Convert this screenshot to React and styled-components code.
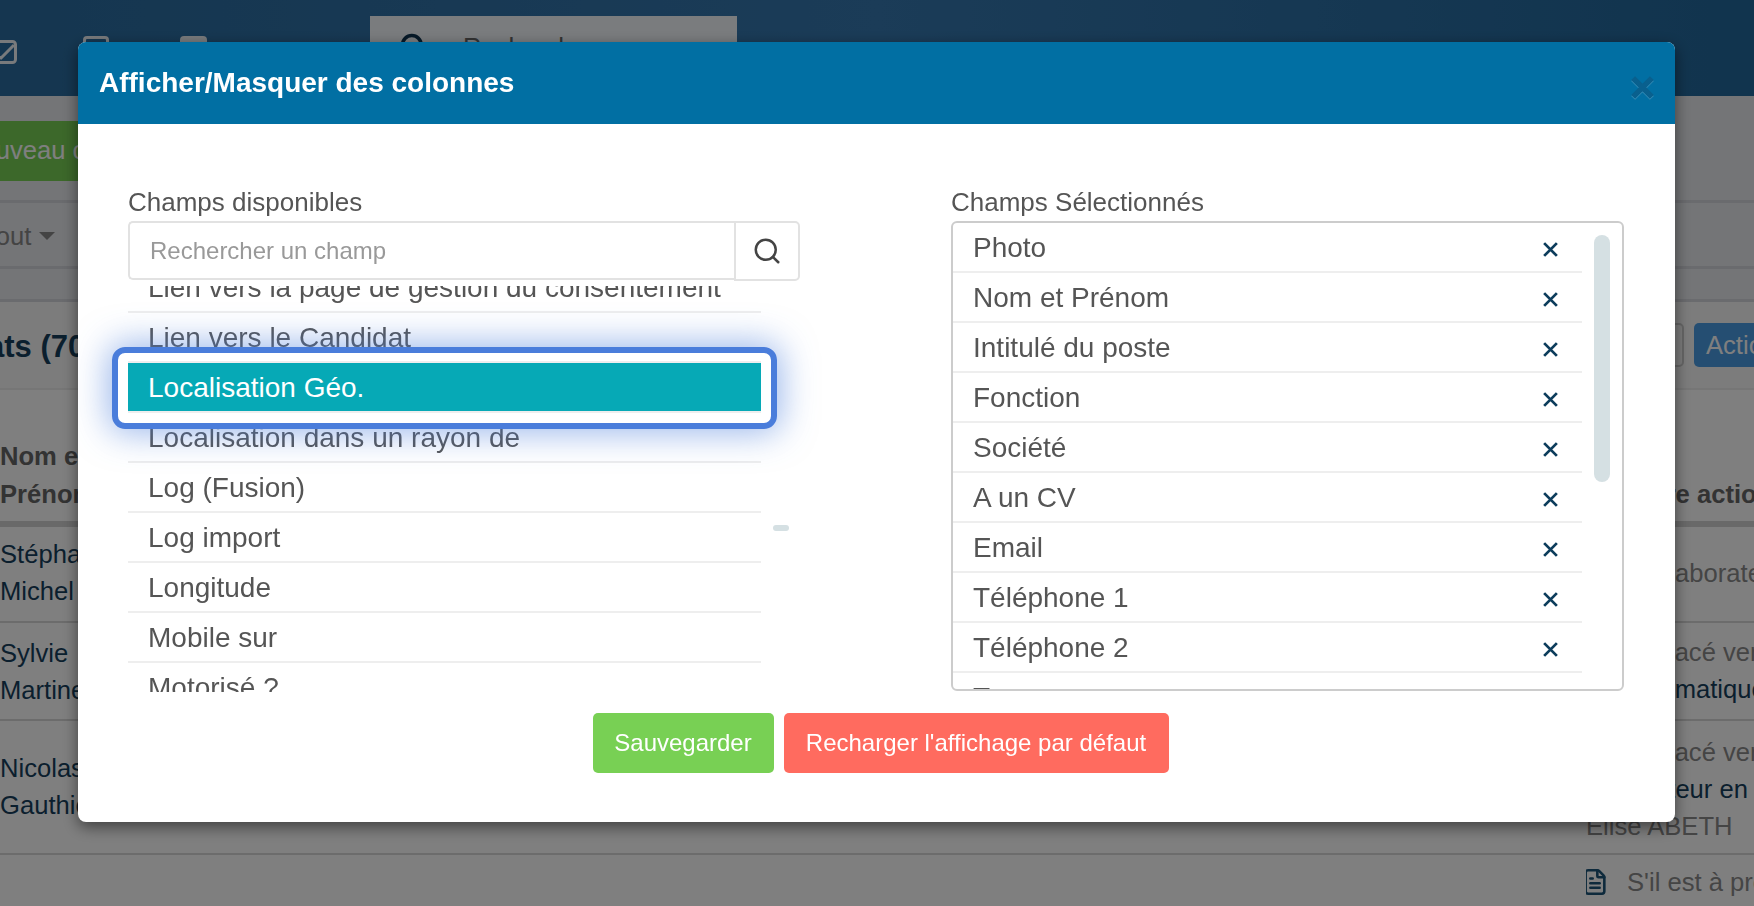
import React from 'react'
import styled, { createGlobalStyle } from 'styled-components'
import { Search, FileText } from 'lucide-react'

const available = [
  'Lien vers la page de gestion du consentement',
  'Lien vers le Candidat',
  'Localisation Géo.',
  'Localisation dans un rayon de',
  'Log (Fusion)',
  'Log import',
  'Longitude',
  'Mobile sur',
  'Motorisé ?',
]

const selected = [
  'Photo',
  'Nom et Prénom',
  'Intitulé du poste',
  'Fonction',
  'Société',
  'A un CV',
  'Email',
  'Téléphone 1',
  'Téléphone 2',
  'Type',
]

const TimesIcon = ({ size = 17, width = 2.6 }) => (
  <svg width={size} height={size} viewBox="0 0 16 16" fill="none" stroke="currentColor" strokeWidth={width}>
    <path d="M2 2 L14 14 M14 2 L2 14" />
  </svg>
)

const App = () => (
  <>
    <GlobalStyle />
    <Page>
      <TopBar>
        <CheckIcon>
          <svg width="26" height="24" viewBox="0 0 26 24" fill="none" stroke="currentColor" strokeWidth="3">
            <rect x="1.5" y="1.5" width="23" height="21" rx="3" />
            <path d="M4 16 L10 18 L23 5" />
          </svg>
        </CheckIcon>
        <OutlineIcon />
        <FilledIcon />
        <SearchBox>
          <Search size={28} strokeWidth={3} color="#0d3350" />
          <SearchHint>Rechercher</SearchHint>
        </SearchBox>
      </TopBar>

      <Band $h={107} $pad={25}>
        <GreenButton>Nouveau candidat</GreenButton>
      </Band>
      <Band $h={66} $pad={14}>
        <FilterLabel>Tout<Caret /></FilterLabel>
      </Band>
      <Band $h={33} />

      <TitleRow>
        <PageTitle>Candidats (70)</PageTitle>
        <TitleActions>
          <GhostButton />
          <BlueButton>Actions</BlueButton>
        </TitleActions>
      </TitleRow>

      <TableHead>
        <HeadCell>Nom et<br />Prénom</HeadCell>
        <HeadRight>Dernière action</HeadRight>
      </TableHead>

      <TableRow $h={96}>
        <NameCell $pad={9}>Stéphane<br />Michel</NameCell>
        <ActionCell $pad={28}>
          <Muted $x={45}>Collaborateur</Muted>
        </ActionCell>
      </TableRow>
      <TableRow $h={98}>
        <NameCell $pad={12}>Sylvie<br />Martinez</NameCell>
        <ActionCell $pad={11}>
          <Muted $x={36}>Déplacé vers</Muted>
          <Strong $x={36}>Automatique</Strong>
        </ActionCell>
      </TableRow>
      <TableRow $h={134}>
        <NameCell $pad={29}>Nicolas<br />Gauthier</NameCell>
        <ActionCell $pad={13}>
          <Muted $x={36}>Déplacé vers</Muted>
          <Strong $x={14}>Recruteur en ligne</Strong>
          <Muted $x={0}>Elise ABETH</Muted>
        </ActionCell>
      </TableRow>
      <LastRow>
        <ActionCell $pad={12}>
          <NoteLine>
            <FileText size={28} strokeWidth={2.2} color="#1c5478" />
            <span>S'il est à prévoir</span>
          </NoteLine>
        </ActionCell>
      </LastRow>
    </Page>

    <Overlay>
      <Modal>
        <ModalHeader>
          <ModalTitle>Afficher/Masquer des colonnes</ModalTitle>
          <CloseButton aria-label="Fermer">
            <TimesIcon size={25} width={3.6} />
          </CloseButton>
        </ModalHeader>

        <ModalBody>
          <Column>
            <FieldLabel>Champs disponibles</FieldLabel>
            <InputGroup>
              <SearchInput type="text" placeholder="Rechercher un champ" />
              <InputAddon>
                <Search size={30} strokeWidth={2} color="#444" />
              </InputAddon>
            </InputGroup>
            <ListViewport>
              <ScrolledList>
                {available.map((name) => (
                  <AvailableRow key={name} $active={name === 'Localisation Géo.'}>{name}</AvailableRow>
                ))}
              </ScrolledList>
              <MiniThumb />
            </ListViewport>
          </Column>

          <Column>
            <FieldLabel>Champs Sélectionnés</FieldLabel>
            <SelectedBox>
              {selected.map((name) => (
                <SelectedRow key={name}>
                  <span>{name}</span>
                  <RemoveIcon><TimesIcon /></RemoveIcon>
                </SelectedRow>
              ))}
              <SelectedThumb />
            </SelectedBox>
          </Column>
        </ModalBody>

        <ModalFooter>
          <FooterButton $color="#78d054" $w={181}>Sauvegarder</FooterButton>
          <FooterButton $color="#ff6b5f" $w={385}>Recharger l'affichage par défaut</FooterButton>
        </ModalFooter>
      </Modal>
    </Overlay>
  </>
)

const GlobalStyle = createGlobalStyle`
  html, body {
    margin: 0;
    height: 906px;
    overflow: hidden;
    background: #fff;
    font-family: "Liberation Sans", Arial, sans-serif;
  }
  * { box-sizing: border-box; }
`

const Page = styled.div`
  width: 1754px;
  height: 906px;
  overflow: hidden;
  font-size: 25.6px;
  color: #7f7f7f;
`

const TopBar = styled.div`
  height: 96px;
  display: flex;
  align-items: flex-start;
  background: linear-gradient(90deg, #2a6ca0 0%, #3678b0 50%, #22689c 100%);
`

const CheckIcon = styled.div`
  margin: 40px 0 0 -9px;
  color: #f0f4f8;
  line-height: 0;
`

const OutlineIcon = styled.div`
  width: 26px;
  height: 30px;
  margin: 36px 0 0 66px;
  border: 3px solid #f0f4f8;
  border-radius: 4px;
`

const FilledIcon = styled.div`
  width: 27px;
  height: 30px;
  margin: 36px 0 0 71px;
  background: #f0f4f8;
  border-radius: 4px;
`

const SearchBox = styled.div`
  width: 367px;
  height: 60px;
  margin: 16px 0 0 163px;
  padding: 16px 0 0 29px;
  display: flex;
  align-items: flex-start;
  gap: 36px;
  background: #f4f8fc;
`

const SearchHint = styled.span`
  color: #666;
  line-height: 44px;
  margin-top: -7px;
`

const Band = styled.div`
  height: ${(p) => p.$h}px;
  padding-top: ${(p) => p.$pad || 0}px;
  background: #e8eaee;
  border-bottom: 3px solid #d4d6dc;
`

const GreenButton = styled.div`
  width: 280px;
  height: 60px;
  margin-left: -57px;
  padding-left: 20px;
  line-height: 58px;
  white-space: nowrap;
  color: #fff;
  background: #78d054;
  border-radius: 5px;
`

const FilterLabel = styled.div`
  margin-left: -17px;
  display: flex;
  align-items: center;
  line-height: 38px;
  color: #888;
`

const Caret = styled.i`
  margin-left: 8px;
  border-left: 8px solid transparent;
  border-right: 8px solid transparent;
  border-top: 8px solid #888;
`

const TitleRow = styled.div`
  height: 88px;
  padding-top: 21px;
  display: flex;
  justify-content: space-between;
  background: #f8f8f8;
  border-bottom: 2px solid #ececec;
`

const PageTitle = styled.h1`
  margin: 2px 0 0 -118px;
  font-size: 31px;
  line-height: 44px;
  color: #163f5c;
  white-space: nowrap;
`

const TitleActions = styled.div`
  display: flex;
  gap: 10px;
  margin-right: -60px;
`

const GhostButton = styled.div`
  width: 60px;
  height: 44px;
  border: 2px solid #ccc;
  border-radius: 5px;
`

const BlueButton = styled.div`
  width: 120px;
  height: 44px;
  padding-left: 12px;
  line-height: 44px;
  color: #fff;
  background: #4a9ce4;
  border-radius: 5px;
`

const TableHead = styled.div`
  height: 137px;
  padding-top: 47px;
  display: flex;
  justify-content: space-between;
  font-weight: 700;
  color: #666;
  line-height: 38px;
  border-bottom: 6px solid #d2d2d2;
`

const HeadCell = styled.div`
  white-space: nowrap;
`

const HeadRight = styled.div`
  width: 168px;
  margin-top: 38px;
  white-space: nowrap;
  overflow: hidden;
`

const TableRow = styled.div`
  height: ${(p) => p.$h}px;
  display: flex;
  justify-content: space-between;
  border-bottom: 2px solid #d8d8d8;
`

const LastRow = styled(TableRow)`
  height: 52px;
  justify-content: flex-end;
  border-bottom: 0;
`

const NameCell = styled.div`
  padding-top: ${(p) => p.$pad}px;
  line-height: 36.5px;
  color: #163f5c;
  white-space: nowrap;
`

const ActionCell = styled.div`
  width: 168px;
  padding-top: ${(p) => p.$pad}px;
  line-height: 37px;
  overflow: hidden;
  white-space: nowrap;
`

const Muted = styled.div`
  margin-left: ${(p) => p.$x}px;
  color: #8a8a8a;
`

const Strong = styled.div`
  margin-left: ${(p) => p.$x}px;
  color: #163f5c;
`

const NoteLine = styled.div`
  display: flex;
  align-items: center;
  gap: 18px;
  margin-left: -5px;
  color: #8a8a8a;
  line-height: 30px;

  svg {
    flex: none;
  }
`

const Overlay = styled.div`
  position: fixed;
  inset: 0;
  padding: 42px 79px 84px 78px;
  background: rgba(0, 0, 0, 0.5);
`

const Modal = styled.div`
  height: 100%;
  display: flex;
  flex-direction: column;
  background: #fff;
  border-radius: 8px;
  box-shadow: 0 5px 15px rgba(0, 0, 0, 0.5);
`

const ModalHeader = styled.div`
  height: 82px;
  flex: none;
  padding: 0 20px 0 21px;
  display: flex;
  align-items: center;
  justify-content: space-between;
  background: #016fa3;
  border-radius: 8px 8px 0 0;
`

const ModalTitle = styled.h4`
  margin: 0 0 1px;
  font-size: 28px;
  font-weight: 700;
  color: #fff;
`

const CloseButton = styled.button`
  padding: 0;
  margin-top: 8px;
  border: 0;
  line-height: 0;
  background: transparent;
  color: #09608e;
  filter: drop-shadow(0 1px 0 rgba(255, 255, 255, 0.22));
`

const ModalBody = styled.div`
  flex: none;
  height: 567px;
  padding: 60px 51px 0 50px;
  display: grid;
  grid-template-columns: 672px 673px;
  justify-content: space-between;
`

const Column = styled.div`
  display: flex;
  flex-direction: column;
  min-width: 0;
`

const FieldLabel = styled.label`
  height: 37px;
  flex: none;
  font-size: 26px;
  line-height: 36px;
  color: #555;
`

const InputGroup = styled.div`
  display: flex;
  height: 60px;
  flex: none;
`

const SearchInput = styled.input`
  flex: 1;
  min-width: 0;
  height: 59px;
  padding: 0 20px;
  font: 24px "Liberation Sans", Arial, sans-serif;
  color: #555;
  background: #fff;
  border: 2px solid #e2e2e2;
  border-right: 0;
  border-radius: 5px 0 0 5px;
  outline: none;

  &::placeholder {
    color: #999;
    opacity: 1;
  }
`

const InputAddon = styled.div`
  width: 66px;
  display: flex;
  align-items: center;
  justify-content: center;
  background: #fff;
  border: 2px solid #e2e2e2;
  border-radius: 0 5px 5px 0;
`

const ListViewport = styled.div`
  position: relative;
  height: 406px;
  margin: 5px -50px 0;
  padding: 0 89px 0 50px;
  overflow: hidden;
`

const ScrolledList = styled.div`
  margin-top: -23px;
`

const AvailableRow = styled.div`
  position: relative;
  height: 50px;
  padding-left: 20px;
  font-size: 28px;
  line-height: 50px;
  white-space: nowrap;
  color: ${(p) => (p.$active ? '#fff' : '#555')};
  background: ${(p) => (p.$active ? '#06a9b6' : 'transparent')};
  border-bottom: 2px solid #eee;
  z-index: ${(p) => (p.$active ? 2 : 'auto')};

  ${(p) => p.$active && `
    &::after {
      content: '';
      position: absolute;
      inset: -16px -16px -18px -16px;
      border: 6px solid #4a7ddb;
      border-radius: 13px;
      pointer-events: none;
      box-shadow:
        0 0 34px 4px rgba(74, 125, 219, 0.55),
        inset 10px 0 #fff,
        inset -10px 0 #fff,
        inset 0 8px #fff,
        inset 0 -10px #fff;
    }
  `}
`

const MiniThumb = styled.div`
  position: absolute;
  left: 695px;
  top: 239px;
  width: 16px;
  height: 6px;
  background: #d5e0e3;
  border-radius: 3px;
`

const SelectedBox = styled.div`
  position: relative;
  height: 470px;
  flex: none;
  border: 2px solid #ccc;
  border-radius: 6px;
  overflow: hidden;
  padding-right: 40px;
`

const SelectedRow = styled.div`
  height: 50px;
  padding: 2px 23px 0 20px;
  display: flex;
  align-items: center;
  justify-content: space-between;
  font-size: 28px;
  color: #555;
  border-bottom: 2px solid #eee;
`

const RemoveIcon = styled.span`
  display: flex;
  margin-top: 2px;
  color: #0d3d5c;
`

const SelectedThumb = styled.div`
  position: absolute;
  top: 12px;
  right: 12px;
  width: 16px;
  height: 247px;
  background: #d5e0e3;
  border-radius: 8px;
`

const ModalFooter = styled.div`
  padding: 22px 0 0 8px;
  display: flex;
  justify-content: center;
  gap: 10px;
`

const FooterButton = styled.button`
  width: ${(p) => p.$w}px;
  height: 60px;
  padding: 0;
  font: 24px "Liberation Sans", Arial, sans-serif;
  color: #fff;
  background: ${(p) => p.$color};
  border: 0;
  border-radius: 5px;
`

export default App
